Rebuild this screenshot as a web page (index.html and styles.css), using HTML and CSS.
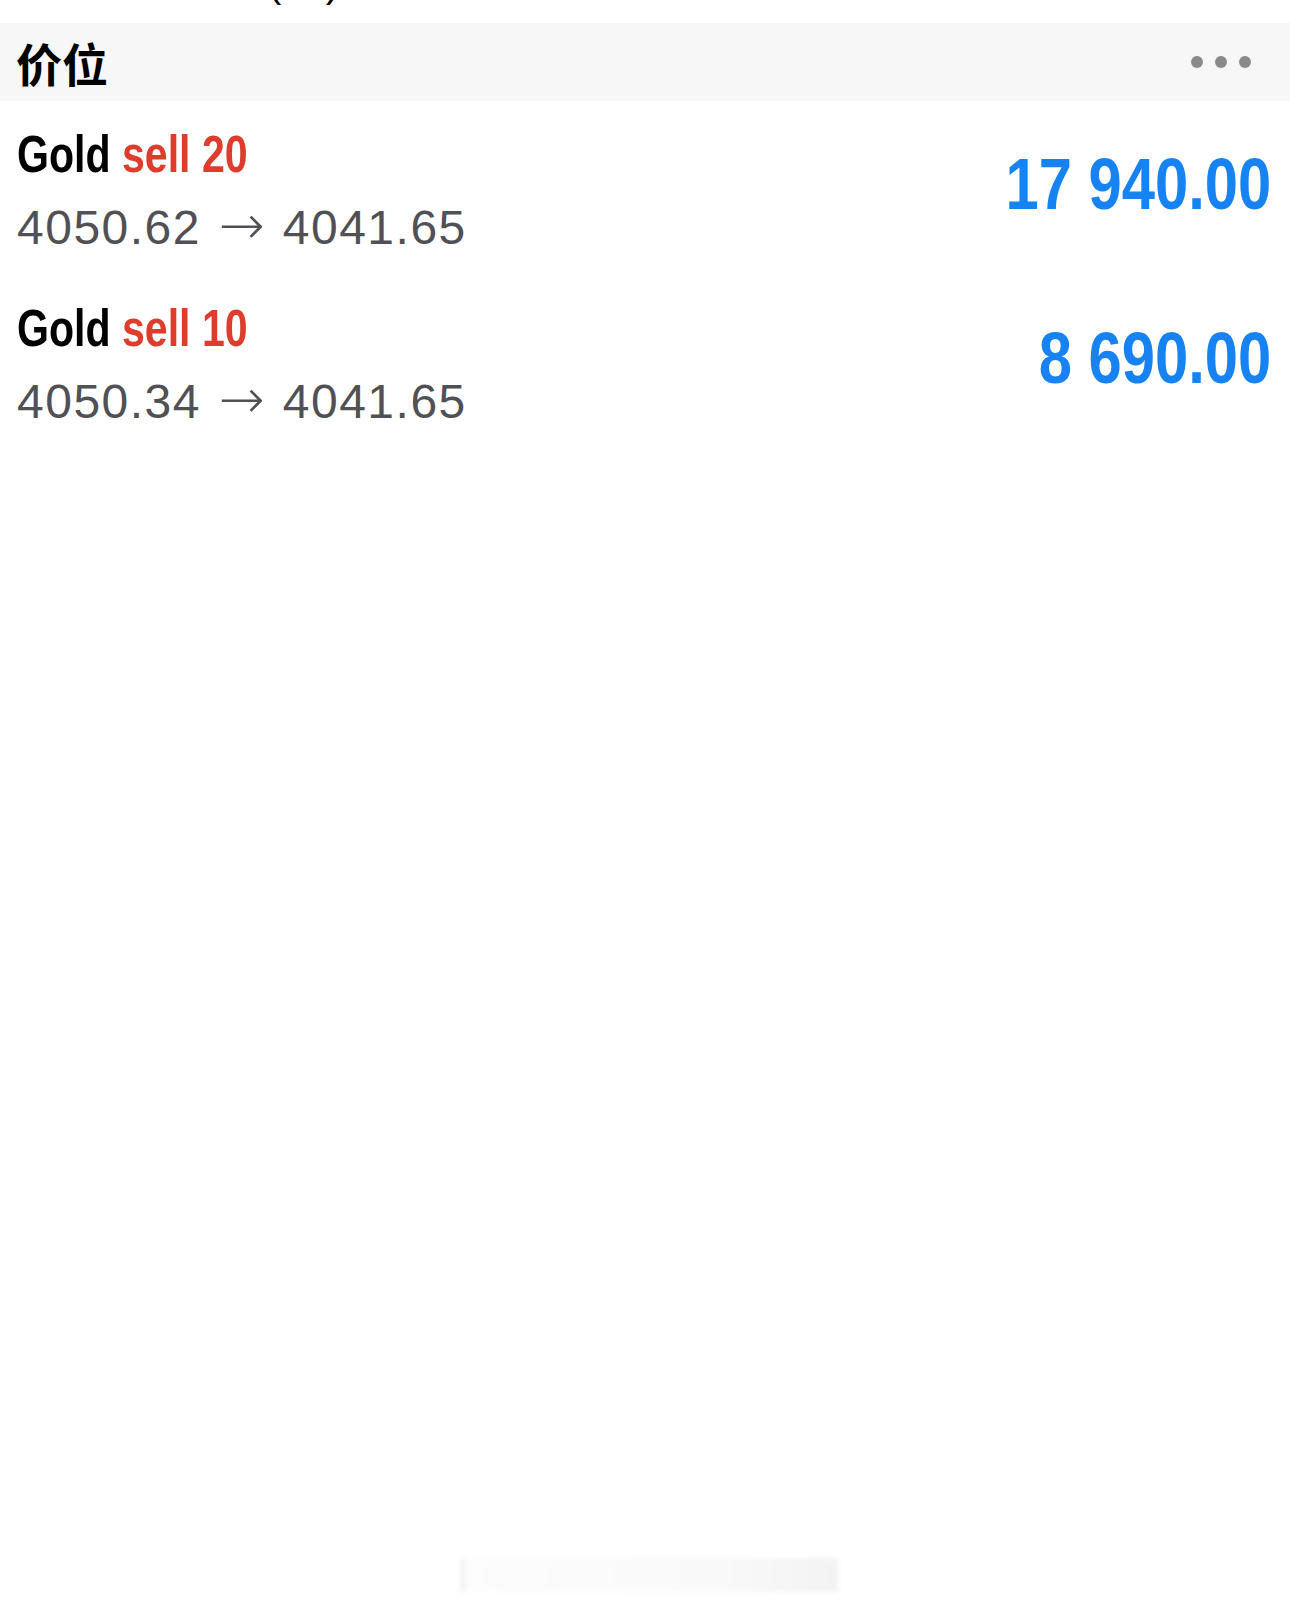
FILE: index.html
```html
<!DOCTYPE html>
<html lang="zh-CN">
<head>
    <meta charset="UTF-8">
    <meta name="viewport" content="width=device-width, initial-scale=1.0">
    <title>价位</title>
    <link rel="stylesheet" href="styles.css">
</head>
<body>
    <div class="page">
        <div class="top-strip">
            <span class="top-title">(20)</span>
        </div>

        <div class="section-head">
            <h2>价位</h2>
            <div class="more">
                <span></span><span></span><span></span>
            </div>
        </div>

        <ul class="orders">
            <li class="order">
                <div class="order-info">
                    <div class="order-title"><span class="narrow">Gold <span class="side">sell 20</span></span></div>
                    <div class="order-price">4050.62 <span class="arrow">→</span> 4041.65</div>
                </div>
                <div class="order-profit"><span class="narrow">17 940.00</span></div>
            </li>
            <li class="order">
                <div class="order-info">
                    <div class="order-title"><span class="narrow">Gold <span class="side">sell 10</span></span></div>
                    <div class="order-price">4050.34 <span class="arrow">→</span> 4041.65</div>
                </div>
                <div class="order-profit"><span class="narrow">8 690.00</span></div>
            </li>
        </ul>

        <div class="home-ghost">
            <div class="ghost-bar"></div>
        </div>
    </div>
</body>
</html>
```

FILE: styles.css
```css
html, body {
    margin: 0;
    padding: 0;
    background: #fff;
}
body {
    font-family: "Liberation Sans", Arial, "Noto Sans CJK SC", sans-serif;
    color: #000;
}
.page {
    display: flex;
    flex-direction: column;
    min-height: 1602px;
}
.top-strip {
    height: 23px;
    overflow: hidden;
}
.top-title {
    display: block;
    font-size: 40px;
    line-height: 40px;
    margin-top: -37px;
    padding-left: 268px;
}
.section-head {
    height: 78px;
    background: #f7f7f7;
    display: flex;
    align-items: center;
    justify-content: space-between;
    padding: 0 39px 0 16px;
}
.section-head h2 {
    margin: 0;
    font-family: "Noto Sans CJK SC", sans-serif;
    font-size: 46px;
    font-weight: 700;
    line-height: 1;
}
.more {
    display: flex;
    gap: 12px;
}
.more span {
    width: 12px;
    height: 12px;
    border-radius: 50%;
    background: #8a8a8a;
}
.orders {
    list-style: none;
    margin: 0;
    padding: 0;
}
.order {
    display: flex;
    align-items: center;
    justify-content: space-between;
    padding: 23px 19px 17px 17px;
}
/* condensed look: no narrow face installed, so squeeze the bold one */
.narrow {
    display: inline-block;
    white-space: nowrap;
}
.order-title {
    font-weight: 700;
    font-size: 52px;
    line-height: 60px;
    color: #000;
}
.order-title .narrow {
    transform: scaleX(0.79);
    transform-origin: left center;
}
.side {
    color: #dc3d2c;
}
.order-price {
    margin-top: 11px;
    font-size: 48px;
    line-height: 60px;
    letter-spacing: 1.5px;
    color: #505055;
}
.arrow {
    font-family: "DejaVu Sans", sans-serif;
    font-weight: 200;
    font-size: 55px;
    letter-spacing: 0;
    margin: 0 3px;
}
.order-profit {
    font-weight: 700;
    font-size: 72px;
    line-height: 80px;
    color: #1782f2;
    margin-bottom: 14px;
}
.order-profit .narrow {
    transform: scaleX(0.83);
    transform-origin: right center;
}
.home-ghost {
    margin-top: auto;
    height: 62px;
    display: flex;
    justify-content: center;
}
.ghost-bar {
    width: 373px;
    height: 34px;
    margin-left: 8px;
    margin-top: 18px;
    background: linear-gradient(90deg, #fdfdfd, #f9f9f9 70%, #f3f3f3);
    border-left: 4px solid #f0f0f0;
    filter: blur(2px);
}
```
